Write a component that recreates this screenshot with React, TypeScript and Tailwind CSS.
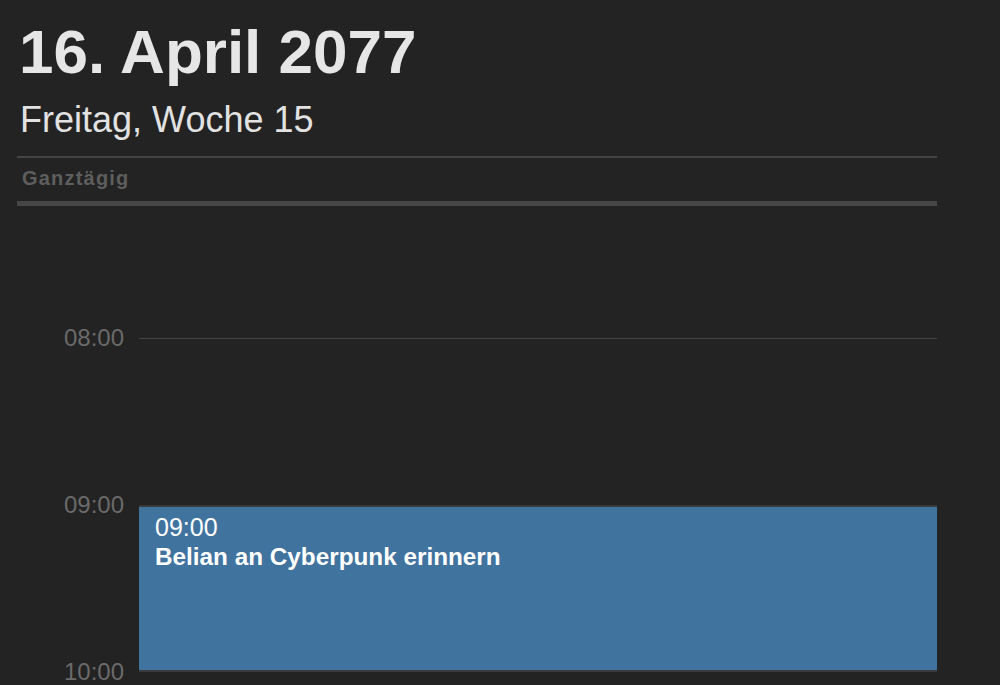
const HOUR = 167;

function HourLabel({ time }: { time: string }) {
  return (
    <div className="w-[122px] shrink-0 pr-[15px] text-right">
      <div className="-mt-[12px] text-[24px] leading-[24px] text-[#6a6a6a]">{time}</div>
    </div>
  );
}

export default function App() {
  return (
    <div
      className="h-[685px] w-[1000px] overflow-hidden bg-[#232323]"
      style={{ fontFamily: '"Liberation Sans", Arial, sans-serif' }}
    >
      <div className="w-[920px] ml-[17px]">
        {/* Header */}
        <h1 className="mt-[21px] pl-[2px] text-[62px] font-bold leading-[62px] text-[#e6e6e6]">
          16. April 2077
        </h1>
        <h2 className="mt-[19px] pl-[3px] text-[36px] leading-[36px] text-[#e2e2e2]">
          Freitag, Woche 15
        </h2>
        <div className="mt-[18px] h-[2px] bg-[#454545]" />
        <div className="mt-[10px] pl-[5px] text-[20px] font-bold leading-[20px] tracking-[1.2px] text-[#5e5e5e]">
          Ganztägig
        </div>
        <div className="mt-[13px] h-[5px] bg-[#474747]" />

        {/* Day grid */}
        <div className="h-[132px]" />

        <div className="flex" style={{ height: HOUR }}>
          <HourLabel time="08:00" />
          <div className="flex-1 border-t border-[#454545]" />
        </div>

        <div className="flex" style={{ height: HOUR }}>
          <HourLabel time="09:00" />
          <div className="flex-1 flex flex-col">
            <div className="h-[2px] bg-[#3a3a3a]" />
            <div className="flex-1 bg-[#41739f] pl-[16px] pt-[5px] text-white">
              <div className="text-[25px] leading-[30px]">09:00</div>
              <div className="text-[24.3px] font-bold leading-[30px]">Belian an Cyberpunk erinnern</div>
            </div>
            <div className="h-[2px] bg-[#3a3a3a]" />
          </div>
        </div>

        <div className="flex" style={{ height: HOUR }}>
          <HourLabel time="10:00" />
          <div className="flex-1" />
        </div>
      </div>
    </div>
  );
}
